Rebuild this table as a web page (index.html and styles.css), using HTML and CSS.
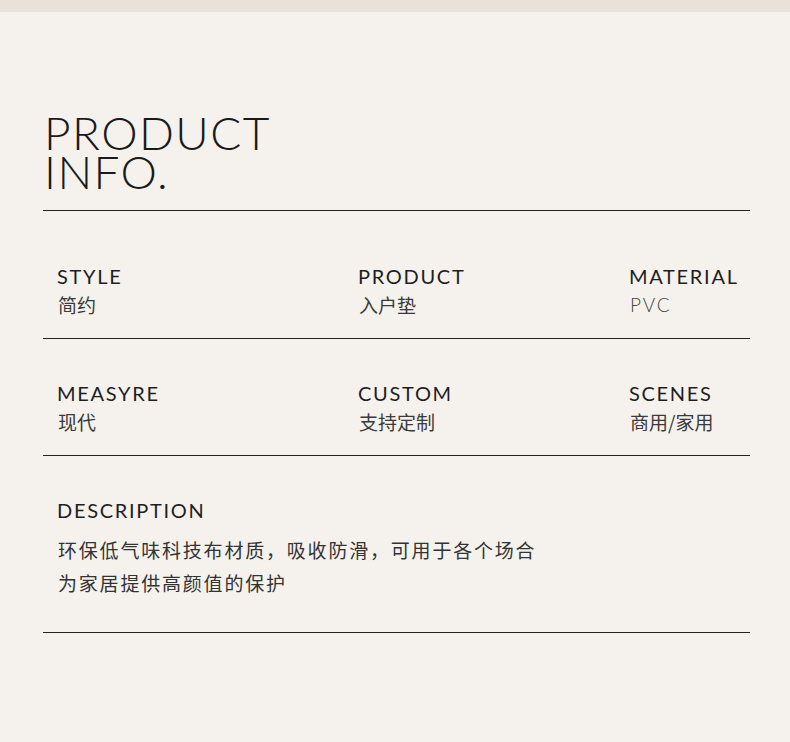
FILE: index.html
```html
<!DOCTYPE html>
<html lang="zh">
<head>
<meta charset="utf-8">
<link rel="stylesheet" href="styles.css">
</head>
<body>
<div class="topband"></div>
<main class="sheet">
  <h1 class="title"><span class="title-line">PRODUCT</span><span class="title-line">INFO.</span></h1>
  <div class="rule"></div>
  <section class="row row-first">
    <div class="cell"><div class="label">STYLE</div><div class="value">简约</div></div>
    <div class="cell"><div class="label">PRODUCT</div><div class="value">入户垫</div></div>
    <div class="cell"><div class="label">MATERIAL</div><div class="value latin">PVC</div></div>
  </section>
  <div class="rule"></div>
  <section class="row">
    <div class="cell"><div class="label">MEASYRE</div><div class="value">现代</div></div>
    <div class="cell"><div class="label">CUSTOM</div><div class="value">支持定制</div></div>
    <div class="cell"><div class="label">SCENES</div><div class="value">商用/家用</div></div>
  </section>
  <div class="rule"></div>
  <section class="desc">
    <div class="label">DESCRIPTION</div>
    <p class="desc-text">环保低气味科技布材质，吸收防滑，可用于各个场合<br>为家居提供高颜值的保护</p>
  </section>
  <div class="rule"></div>
</main>
</body>
</html>
```

FILE: styles.css
```css
html, body {
  margin: 0;
  padding: 0;
  background: #f5f2ee;
}
body {
  width: 790px;
  height: 742px;
  overflow: hidden;
  font-family: Lato, "Noto Sans CJK SC", sans-serif;
  color: #1e1e1e;
}
.topband {
  height: 12px;
  background: #e9e2db;
}
.sheet {
  margin: 0 40px 0 43px;
  width: 707px;
}
.title {
  display: flex;
  flex-direction: column;
  margin: 103px 0 21px 1px;
  font-family: Lato, sans-serif;
  font-weight: 300;
  font-size: 46px;
  line-height: 35px;
  letter-spacing: 1.4px;
  color: #1a1a1a;
}
.title-line + .title-line {
  margin-top: 4px;
}
.rule {
  height: 1px;
  background: #222;
}
.row {
  display: grid;
  grid-template-columns: 301px 271px 1fr;
  padding: 42px 0 21px 14px;
}
.row-first {
  padding-top: 53px;
}
.label {
  font-family: Lato, sans-serif;
  font-size: 20px;
  line-height: 24px;
  letter-spacing: 1.7px;
  color: #1e1e1e;
}
.value {
  margin-top: 5px;
  font-family: "Noto Sans CJK SC", sans-serif;
  font-size: 19px;
  line-height: 24px;
  color: #3a3a3a;
  padding-left: 1px;
}
.value.latin {
  font-family: Lato, sans-serif;
  font-weight: 300;
  letter-spacing: 1.8px;
  color: #444;
}
.desc {
  padding: 42px 0 33px 14px;
}
.desc-text {
  margin: 11px 0 0 1px;
  font-family: "Noto Sans CJK SC", sans-serif;
  font-size: 19px;
  line-height: 33px;
  letter-spacing: 1.8px;
  color: #333;
}
```
